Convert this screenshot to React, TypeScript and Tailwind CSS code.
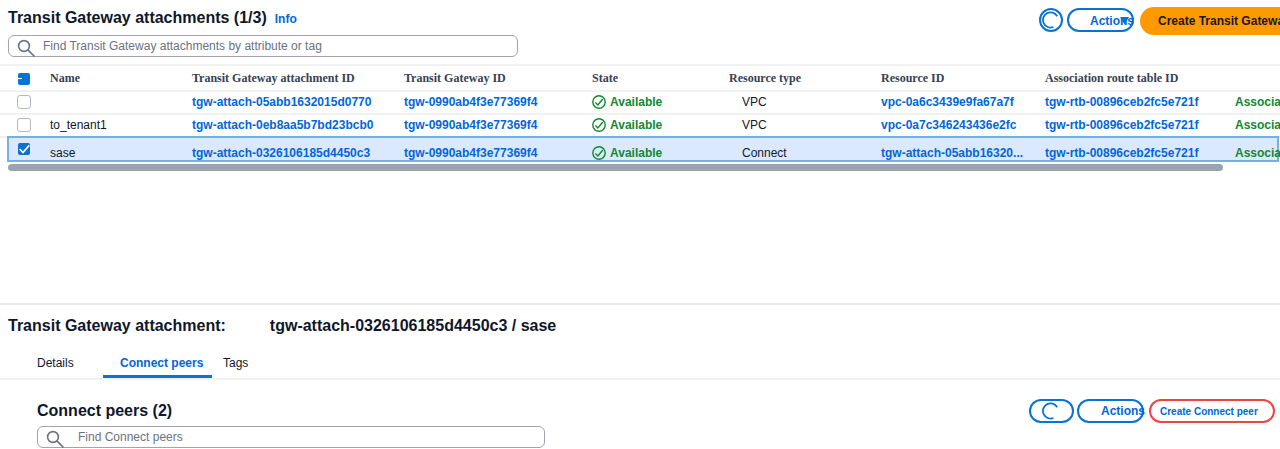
import React from 'react';

type Attachment = {
  name: string;
  id: string;
  gateway: string;
  type: string;
  resource: string;
  routeTable: string;
  selected?: boolean;
};

const attachments: Attachment[] = [
  {
    name: '',
    id: 'tgw-attach-05abb1632015d0770',
    gateway: 'tgw-0990ab4f3e77369f4',
    type: 'VPC',
    resource: 'vpc-0a6c3439e9fa67a7f',
    routeTable: 'tgw-rtb-00896ceb2fc5e721f',
  },
  {
    name: 'to_tenant1',
    id: 'tgw-attach-0eb8aa5b7bd23bcb0',
    gateway: 'tgw-0990ab4f3e77369f4',
    type: 'VPC',
    resource: 'vpc-0a7c346243436e2fc',
    routeTable: 'tgw-rtb-00896ceb2fc5e721f',
  },
  {
    name: 'sase',
    id: 'tgw-attach-0326106185d4450c3',
    gateway: 'tgw-0990ab4f3e77369f4',
    type: 'Connect',
    resource: 'tgw-attach-05abb16320...',
    routeTable: 'tgw-rtb-00896ceb2fc5e721f',
    selected: true,
  },
];

function SearchIcon() {
  return (
    <svg className="pointer-events-none absolute top-1 left-[9px] size-[19px]" viewBox="0 0 19 19" fill="none" stroke="#6b7280" strokeWidth="1.6" aria-hidden="true">
      <circle cx="7" cy="7" r="5.4" />
      <path d="M10.9 10.9L17.5 17.5" />
    </svg>
  );
}

function RefreshIcon() {
  return (
    <svg className="size-[18px] shrink-0" viewBox="0 0 18 18" fill="none" stroke="#0972d3" strokeWidth="1.8" aria-hidden="true">
      <path d="M16.2 5.2A7.6 7.6 0 1 0 12.4 16" />
    </svg>
  );
}

function AvailableIcon() {
  return (
    <svg className="size-[14px] shrink-0" viewBox="0 0 14 14" fill="none" stroke="#0f8a2e" strokeWidth="1.4" aria-hidden="true">
      <circle cx="7" cy="7" r="6.2" />
      <path d="M3.4 7.6L5.9 9.9L10.8 4" />
    </svg>
  );
}

function Checkbox({ label, checked, mixed }: { label: string; checked?: boolean; mixed?: boolean }) {
  return (
    <span className="relative block size-[14px]">
      <input
        type="checkbox"
        aria-label={label}
        defaultChecked={checked}
        className="peer block size-[14px] appearance-none rounded-[3px] border border-[#b4b8c0] bg-white bg-clip-padding checked:border-transparent checked:bg-[#0972d3]"
      />
      {checked && (
        <svg className="pointer-events-none absolute inset-0 hidden size-[14px] peer-checked:block" viewBox="0 0 14 14" fill="none" stroke="#fff" strokeWidth="1.7" aria-hidden="true">
          {mixed ? <path d="M1 6.5H5" strokeWidth="1.2" /> : <path d="M2.6 7L6 10.6L12.2 3.4" />}
        </svg>
      )}
    </span>
  );
}

function IdLink({ children }: { children: React.ReactNode }) {
  return (
    <a href="#" className="font-bold text-[#0066dc]">
      {children}
    </a>
  );
}

function AttachmentRow({ item }: { item: Attachment }) {
  const pad = item.selected ? 'pt-[6px]' : '';
  return (
    <tr
      className={
        item.selected
          ? 'relative isolate h-6'
          : 'h-[23px] *:border-b-2 *:border-[#f1f1f2] *:pb-[2px]'
      }
    >
      <td className={item.selected ? 'pb-[2px] pl-[17px]' : 'pl-[17px]'}>
        {item.selected && (
          <span className="absolute -top-[2px] right-px bottom-0 left-[7px] -z-10 border-2 border-[#74b0e8] bg-[#dbe9ff]" />
        )}
        <Checkbox label={`Select ${item.name || item.id}`} checked={item.selected} />
      </td>
      <td className={pad}>{item.name}</td>
      <td className={pad}><IdLink>{item.id}</IdLink></td>
      <td className={pad}><IdLink>{item.gateway}</IdLink></td>
      <td className={pad}>
        <span className="flex items-center gap-1 font-bold text-[#0f8a2e]">
          <AvailableIcon />
          Available
        </span>
      </td>
      <td className={`pl-[13px] ${pad}`}>{item.type}</td>
      <td className={pad}><IdLink>{item.resource}</IdLink></td>
      <td className={pad}><IdLink>{item.routeTable}</IdLink></td>
      <td className={`font-bold text-[#0f8a2e] ${pad}`}>Associated</td>
    </tr>
  );
}

export default function App() {
  return (
    <div className="overflow-hidden bg-white font-['Liberation_Sans',Arial,sans-serif] text-[12px] leading-4 text-[#0f172a]">
      <section className="min-h-[303px]">
        <header className="flex h-[35px] items-start justify-between pt-[7px] pl-2">
          <div className="flex items-baseline gap-2 whitespace-nowrap">
            <h1 className="text-[16px] leading-[22px] font-bold">Transit Gateway attachments (1/3)</h1>
            <a href="#" className="font-bold text-[#0066dc]">Info</a>
          </div>
          <div className="flex w-[241px] shrink-0 items-start whitespace-nowrap">
            <button aria-label="Refresh attachments" className="mt-px mr-1 flex size-6 shrink-0 items-center rounded-full border-2 border-[#0972d3]">
              <RefreshIcon />
            </button>
            <button className="relative mt-px mr-[6px] flex h-6 w-[67px] shrink-0 items-center rounded-full border-2 border-[#0972d3] pt-[2px] pl-[21px] font-bold text-[#0066dc]">
              Actions
              <svg className="absolute top-[6px] right-[3px] size-[9px]" viewBox="0 0 9 9" fill="#0972d3" aria-hidden="true">
                <path d="M0 1H9L4.5 8.5Z" />
              </svg>
            </button>
            <button className="flex h-7 shrink-0 items-center rounded-full bg-[#ff9900] px-[18px] font-bold text-[#16191f]">
              Create Transit Gateway attachment
            </button>
          </div>
        </header>

        <div className="relative ml-2 w-full max-w-[510px]">
          <input
            type="text"
            aria-label="Find Transit Gateway attachments"
            placeholder="Find Transit Gateway attachments by attribute or tag"
            className="block h-[22px] w-full rounded-md border border-[#a3a3ae] bg-white pr-2 pl-[34px] placeholder:text-[#6b7280]"
          />
          <SearchIcon />
        </div>

        <div className="mt-[7px] overflow-hidden">
          <table className="w-full table-fixed border-separate border-spacing-0 text-left whitespace-nowrap">
            <colgroup>
              <col className="w-[50px]" />
              <col className="w-[142px]" />
              <col className="w-[212px]" />
              <col className="w-[188px]" />
              <col className="w-[137px]" />
              <col className="w-[152px]" />
              <col className="w-[164px]" />
              <col className="w-[190px]" />
              <col />
            </colgroup>
            <thead className="font-['Liberation_Serif','Times_New_Roman',serif] text-[#374151]">
              <tr className="h-7 *:border-y-2 *:border-[#f1f1f2]">
                <th className="pt-[2px] pl-[17px]"><Checkbox label="Select all attachments" checked mixed /></th>
                <th>Name</th>
                <th>Transit Gateway attachment ID</th>
                <th>Transit Gateway ID</th>
                <th>State</th>
                <th>Resource type</th>
                <th>Resource ID</th>
                <th>Association route table ID</th>
                <th />
              </tr>
            </thead>
            <tbody>
              {attachments.map((item) => (
                <AttachmentRow key={item.id} item={item} />
              ))}
            </tbody>
          </table>
        </div>
        <div className="mt-[2px] mr-[57px] ml-2 h-[7px] rounded-full bg-[#9ca3af]" />
      </section>

      <section className="border-t-2 border-[#e8e8eb]">
        <h2 className="flex gap-11 pt-[10px] pl-2 text-[16px] leading-[22px] font-bold whitespace-nowrap">
          <span>Transit Gateway attachment:</span>
          <span>tgw-attach-0326106185d4450c3 / sase</span>
        </h2>

        <div role="tablist" className="mt-[18px] flex h-[25px] items-end border-b-2 border-[#f1f1f2] pl-[37px]">
          <button role="tab" aria-selected="false" className="h-[23px] w-[66px] pb-[7px] text-left">Details</button>
          <button role="tab" aria-selected="true" className="h-[23px] w-[109px] border-b-[3px] border-[#0972d3] pb-1 pl-[17px] text-left font-bold text-[#0066dc]">Connect peers</button>
          <button role="tab" aria-selected="false" className="h-[23px] pb-[7px] pl-[11px] text-left">Tags</button>
        </div>

        <header className="flex h-[46px] items-start justify-between pt-[19px] pr-[5px] pl-[37px] whitespace-nowrap">
          <h3 className="pt-px text-[16px] leading-[22px] font-bold">Connect peers (2)</h3>
          <div className="flex items-start font-bold text-[#0066dc]">
            <button aria-label="Refresh peers" className="mr-[3px] flex h-6 w-[45px] items-center rounded-full border-2 border-[#0972d3] pl-[10px]">
              <RefreshIcon />
            </button>
            <button className="mr-[5px] flex h-6 w-[67px] items-center rounded-full border-2 border-[#0972d3] pl-[22px]">Actions</button>
            <button className="flex h-6 w-[126px] items-center rounded-full border-2 border-[#ef4444] pt-[2px] pl-[9px] text-[10px]">Create Connect peer</button>
          </div>
        </header>

        <div className="relative mb-[1px] ml-[37px] w-full max-w-[508px]">
          <input
            type="text"
            aria-label="Find Connect peers"
            placeholder="Find Connect peers"
            className="block h-[22px] w-full rounded-md border border-[#a3a3ae] bg-white pr-2 pl-10 placeholder:text-[#6b7280]"
          />
          <SearchIcon />
        </div>
      </section>
    </div>
  );
}
